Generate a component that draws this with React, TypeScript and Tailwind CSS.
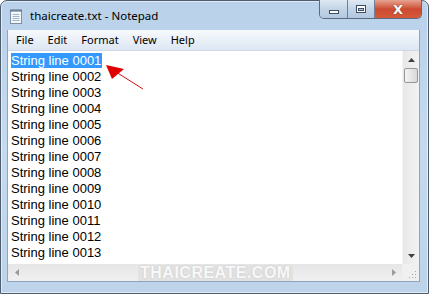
import React from "react";

const lines = Array.from({ length: 13 }, (_, i) => `String line ${String(i + 1).padStart(4, "0")}`);

const menus = ["File", "Edit", "Format", "View", "Help"];

const NotepadIcon = () => (
  <svg width="16" height="16" viewBox="0 0 16 16">
    <rect x="2.5" y="2.5" width="11" height="13" fill="#f4f8fc" stroke="#7d8ea3" />
    <line x1="4.5" y1="6.5" x2="11.5" y2="6.5" stroke="#9fb3c8" />
    <line x1="4.5" y1="8.5" x2="11.5" y2="8.5" stroke="#9fb3c8" />
    <line x1="4.5" y1="10.5" x2="11.5" y2="10.5" stroke="#9fb3c8" />
    <line x1="4.5" y1="12.5" x2="11.5" y2="12.5" stroke="#9fb3c8" />
    <path d="M3 1v3M5 1v3M7 1v3M9 1v3M11 1v3M13 1v3" stroke="#5b6f86" strokeWidth="1" />
  </svg>
);

const App = () => {
  return (
    <div className="w-[429px] h-[294px] bg-white overflow-hidden relative">
      {/* ウィンドウ枠 */}
      <div className="w-full h-full flex flex-col rounded-t-[7px] border border-[#4e5d6e] bg-gradient-to-b from-[#b9d1ea] via-[#c5daee] to-[#bcd3ea] shadow-[inset_0_0_0_1px_rgba(255,255,255,0.55)]">
        {/* タイトルバー */}
        <div className="h-[29px] flex items-start shrink-0">
          <div className="flex items-center h-[30px] pl-[7px] gap-[6px]">
            <NotepadIcon />
            <span className="text-[11.5px] text-black" style={{ fontFamily: '"Noto Sans", "Open Sans", sans-serif' }}>
              thaicreate.txt - Notepad
            </span>
          </div>
          <div className="ml-auto mr-[6px] flex h-[19px] -mt-px border border-t-0 border-[#5b6b80] rounded-b-[5px] overflow-hidden">
            <div className="w-[28px] flex items-center justify-center bg-gradient-to-b from-[#dfe9f4] via-[#c3d4e7] to-[#b2c8e0] border-r border-[#6f819a]">
              <div className="w-[10px] h-[4px] mt-[5px] bg-white border border-[#3e4d62]" />
            </div>
            <div className="w-[27px] flex items-center justify-center bg-gradient-to-b from-[#dfe9f4] via-[#c3d4e7] to-[#b2c8e0] border-r border-[#6f819a]">
              <div className="w-[10px] h-[8px] border border-[#3e4d62] bg-white flex items-center justify-center">
                <div className="w-[6px] h-[3px] border border-[#3e4d62] bg-[#b8c8da]" />
              </div>
            </div>
            <div className="w-[46px] flex items-center justify-center bg-gradient-to-b from-[#e6a393] via-[#cc4a31] to-[#d45a3b]">
              <span className="text-white font-bold text-[13px] leading-none" style={{ fontFamily: '"DejaVu Sans", sans-serif', textShadow: "0 0 1px #4a1a10" }}>
                X
              </span>
            </div>
          </div>
        </div>

        {/* 本体 */}
        <div className="flex-1 flex flex-col pl-[6px] pr-[8px] pb-[11px] min-h-0">
          <div className="flex-1 flex flex-col border border-[#8fa4bd] border-t-0 min-h-0">
            {/* メニューバー */}
            <div className="h-[21px] shrink-0 flex items-center pl-px bg-gradient-to-b from-[#f8fafd] to-[#dce6f2] text-[11px] text-black border-b border-[#cfd9e6]" style={{ fontFamily: '"Noto Sans", "Open Sans", sans-serif' }}>
              {menus.map((m) => (
                <span key={m} className="px-[7px]">
                  {m}
                </span>
              ))}
            </div>

            {/* テキスト領域 */}
            <div className="flex-1 flex min-h-0 bg-white">
              <div className="flex-1 pt-[2px] pl-[3px] text-[13px] leading-[16px] text-black" style={{ fontFamily: '"Liberation Sans", Arial, sans-serif' }}>
                {lines.map((l, i) => (
                  <div key={l}>
                    <span className={i === 0 ? "bg-[#3399ff] text-white pr-[1px]" : ""}>{l}</span>
                  </div>
                ))}
              </div>
              {/* 縦スクロールバー */}
              <div className="w-[17px] flex flex-col bg-gradient-to-r from-[#e8e8e8] to-[#f2f2f2] border-l border-[#f4f4f4]">
                <div className="h-[17px] flex items-center justify-center">
                  <svg width="7" height="4" viewBox="0 0 7 4"><path d="M0 4L3.5 0L7 4Z" fill="#404040" /></svg>
                </div>
                <div className="h-[15px] mx-px rounded-[2px] border border-[#979797] bg-gradient-to-r from-[#f4f4f4] to-[#d8d8d8]" />
                <div className="flex-1" />
                <div className="h-[17px] flex items-center justify-center">
                  <svg width="7" height="4" viewBox="0 0 7 4"><path d="M0 0L3.5 4L7 0Z" fill="#404040" /></svg>
                </div>
              </div>
            </div>

            {/* 横スクロールバー */}
            <div className="h-[17px] shrink-0 flex bg-[#ededed]">
              <div className="flex-1 flex items-center bg-gradient-to-b from-[#e6e6e6] to-[#f0f0f0]">
                <div className="w-[17px] flex justify-center">
                  <svg width="4" height="7" viewBox="0 0 4 7"><path d="M4 0L0 3.5L4 7Z" fill="#9a9a9a" /></svg>
                </div>
                <div className="flex-1 flex pl-[113px]">
                  <span className="text-[16px] font-bold tracking-[0.5px] text-[#f8f8f8] leading-none px-[2px] bg-[#e2e2e2]" style={{ fontFamily: '"Liberation Sans", Arial, sans-serif', textShadow: "0 0 2px #c4c4c4" }}>
                    THAICREATE.COM
                  </span>
                </div>
                <div className="w-[17px] flex justify-center">
                  <svg width="4" height="7" viewBox="0 0 4 7"><path d="M0 0L4 3.5L0 7Z" fill="#9a9a9a" /></svg>
                </div>
              </div>
              <div className="w-[17px] flex items-end justify-end p-[2px] bg-[#f0f0f0]">
                <svg width="8" height="8" viewBox="0 0 8 8">
                  <rect x="6" y="0" width="1" height="1" fill="#a8a8a8" />
                  <rect x="3" y="3" width="1" height="1" fill="#a8a8a8" />
                  <rect x="6" y="3" width="1" height="1" fill="#a8a8a8" />
                  <rect x="0" y="6" width="1" height="1" fill="#a8a8a8" />
                  <rect x="3" y="6" width="1" height="1" fill="#a8a8a8" />
                  <rect x="6" y="6" width="1" height="1" fill="#a8a8a8" />
                </svg>
              </div>
            </div>
          </div>
        </div>
      </div>

      {/* 赤い矢印 */}
      <svg className="absolute left-0 top-0 pointer-events-none" width="429" height="294">
        <line x1="116" y1="72" x2="143" y2="89" stroke="#d01010" strokeWidth="1" />
        <path d="M106 65L124 69L112 79Z" fill="#e00000" />
      </svg>
    </div>
  );
};

export default App;
